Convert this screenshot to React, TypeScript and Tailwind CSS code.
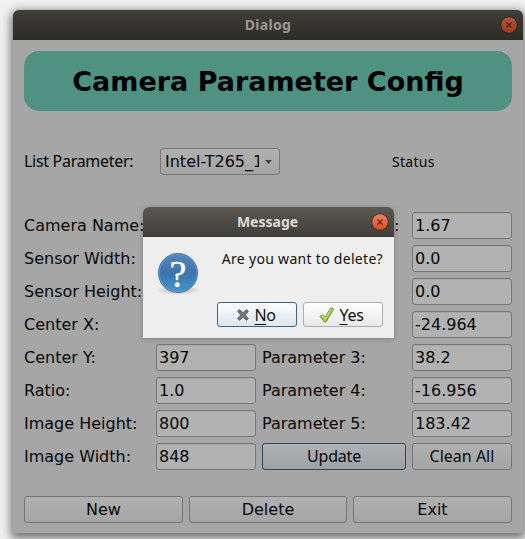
import React from "react";

const dejavu = "font-['DejaVu_Sans',sans-serif]";
const noto = "font-['Noto_Sans',sans-serif]";

function CloseButton({ dim }: { dim?: boolean }) {
  return (
    <svg viewBox="0 0 18 18" className="size-[18px]" aria-label="Close">
      <defs>
        <linearGradient id={dim ? "closeDim" : "closeLit"} x1="0" y1="0" x2="0" y2="1">
          <stop offset="0" stopColor={dim ? "#b0573a" : "#f5805c"} />
          <stop offset="1" stopColor={dim ? "#a03a1c" : "#e4491f"} />
        </linearGradient>
      </defs>
      <circle cx="9" cy="9" r="8.5" fill={dim ? "#23231f" : "#35342f"} />
      <circle cx="9" cy="9" r="7.8" fill={`url(#${dim ? "closeDim" : "closeLit"})`} />
      <path d="M6.4 6.4l5.2 5.2M11.6 6.4l-5.2 5.2" stroke="#38231b" strokeWidth="1.1" />
    </svg>
  );
}

function Label({ children }: { children: React.ReactNode }) {
  return <label className="flex h-[27px] items-center whitespace-nowrap pt-px">{children}</label>;
}

function Field({ value }: { value: string }) {
  return (
    <div className="flex h-[27px] items-center overflow-hidden rounded-[3px] border border-[#777] bg-[#b2b2b2] pl-[2px] pt-px shadow-[inset_0_1px_0_#a8a8a8]">
      {value}
    </div>
  );
}

function DimButton({ children, className = "" }: { children: React.ReactNode; className?: string }) {
  return (
    <button
      className={`flex h-[27px] items-center justify-center whitespace-nowrap rounded-[3px] border ${className || "border-[#777] bg-linear-to-b from-[#b0b0b0] to-[#a5a5a5] pt-px"}`}
    >
      {children}
    </button>
  );
}

const colon = <span className="pl-[132px]">:</span>;

const rows: [string, string, React.ReactNode, string][] = [
  ["Camera Name:", "", colon, "1.67"],
  ["Sensor Width:", "", "", "0.0"],
  ["Sensor Height:", "", "", "0.0"],
  ["Center X:", "", "", "-24.964"],
  ["Center Y:", "397", "Parameter 3:", "38.2"],
  ["Ratio:", "1.0", "Parameter 4:", "-16.956"],
  ["Image Height:", "800", "Parameter 5:", "183.42"],
];

function QuestionIcon() {
  return (
    <svg viewBox="0 0 46 46" className="h-[46px] w-[46px]">
      <defs>
        <linearGradient id="ball" x1="0" y1="0" x2="0" y2="1">
          <stop offset="0" stopColor="#5585bd" />
          <stop offset="0.5" stopColor="#3c74ac" />
          <stop offset="1" stopColor="#4595ca" />
        </linearGradient>
        <radialGradient id="ground">
          <stop offset="0" stopColor="#777" stopOpacity="0.55" />
          <stop offset="1" stopColor="#777" stopOpacity="0" />
        </radialGradient>
      </defs>
      <ellipse cx="23" cy="39" rx="22" ry="5" fill="url(#ground)" />
      <circle cx="23" cy="22" r="19.6" fill="url(#ball)" stroke="#295d94" strokeWidth="0.7" />
      <circle cx="23" cy="22" r="18.7" fill="none" stroke="#79a8d4" strokeOpacity="0.65" strokeWidth="0.8" />
      <text x="23" y="35.5" textAnchor="middle" fontSize="38" fill="#fff" stroke="#fff" strokeWidth="0.4" fontFamily="Liberation Serif, serif">?</text>
    </svg>
  );
}

function MessageBox() {
  return (
    <div className={`absolute left-[143px] top-[207px] h-[131px] w-[251px] overflow-hidden rounded-t-[6px] bg-[#eee] text-[14px] shadow-[0_1px_5px_rgba(0,0,0,0.25)] ${noto}`}>
      <div className="relative flex h-[30px] items-center justify-center bg-linear-to-b from-[#5b5850] to-[#403f3a] pb-px pr-[2px] font-bold text-[#dfdbd2]">
        Message
        <div className="absolute right-[5px] top-[6px]"><CloseButton /></div>
      </div>
      <div className="flex justify-between pl-[12px] pr-[11px] pt-[13px]">
        <div className="pt-px"><QuestionIcon /></div>
        <p className="whitespace-nowrap text-[14px] leading-[18px] tracking-[0.3px] text-[#111]">Are you want to delete?</p>
      </div>
      <div className="mt-[5px] flex justify-end gap-[6px] pr-[11px] text-[16px] text-[#111]">
        <button className="flex h-[25px] w-[80px] items-center justify-center gap-[5px] rounded-[3px] border border-[#3b6686] bg-linear-to-b from-[#fbfdfe] to-[#dce7ef] pr-[3px]">
          <svg viewBox="0 0 14 14" className="size-[14px]">
            <path d="M3.5 1.5L7 4.7l3.5-3.2 2 2L9.3 7l3.2 3.5-2 2L7 9.3l-3.5 3.2-2-2L4.7 7 1.5 3.5z" fill="#747474" stroke="#555" strokeWidth="0.8" strokeLinejoin="round" />
          </svg>
          <span className="tracking-[-0.5px]"><span className="underline decoration-1 underline-offset-[3px]">N</span>o</span>
        </button>
        <button className="flex h-[25px] w-[80px] items-center justify-center gap-[4px] rounded-[3px] border border-[#adadad] bg-linear-to-b from-[#fefefe] to-[#e9e9e9] pr-[3px]">
          <svg viewBox="0 0 16 16" className="size-[16px]">
            <path d="M1 9.4l2.6-1.7 2.3 2.8L11.8.8l2.8 1.1-7.5 13-1.6.2z" fill="#a3d34c" stroke="#5d852a" strokeWidth="0.9" strokeLinejoin="round" />
            <path d="M2.3 9.5l1.2-.8 2.5 3L12.2 2" fill="none" stroke="#d0eb96" strokeWidth="0.8" />
          </svg>
          <span className="tracking-[-0.3px]"><span className="underline decoration-1 underline-offset-[3px]">Y</span>es</span>
        </button>
      </div>
    </div>
  );
}

export default function App() {
  return (
    <div className={`relative h-[539px] w-[525px] overflow-hidden bg-[#f0f0f0] pl-[13px] pt-[10px] text-[16px] text-[#080808] ${dejavu}`}>
      <main className="flex h-[523px] w-[510px] flex-col rounded-t-[6px] bg-[#a6a6a6] shadow-[0_3px_10px_2px_rgba(0,0,0,0.55)]">
        <header className={`relative flex h-[30px] shrink-0 items-center justify-center rounded-t-[6px] bg-linear-to-b from-[#3f3e39] to-[#2c2c28] pb-[2px] text-[14px] font-bold tracking-[0.3px] text-[#9b9892] ${noto}`}>
          Dialog
          <div className="absolute right-[5px] top-[6px]"><CloseButton dim /></div>
        </header>
        <div className="flex flex-col px-[11px] pt-[11px]">
          <h1 className="flex h-[60px] items-center justify-center rounded-[15px] bg-[#509281] pt-[2px] text-[27px] font-bold text-black">
            Camera Parameter Config
          </h1>
          <div className={`mt-[37px] flex h-[27px] items-center ${noto}`}>
            <span className="w-[136px] whitespace-nowrap pb-px tracking-[-0.3px]">List Parameter:</span>
            <div className={`flex h-[27px] w-[120px] items-center justify-between rounded-[3px] border border-[#777] bg-linear-to-b from-[#b0b0b0] to-[#a5a5a5] pl-[4px] pr-[7px] ${dejavu}`}>
              <span className="w-[94px] overflow-hidden whitespace-nowrap">Intel-T265_1</span>
              <svg viewBox="0 0 7 4" className="h-[4px] w-[7px]"><path d="M0 0h7L3.5 4z" fill="#444" /></svg>
            </div>
            <span className="ml-[112px] text-[14px] tracking-[0.3px]">Status</span>
          </div>
          <div className="mt-[37px] grid grid-cols-[126px_100px_144px_100px] gap-[6px]">
            {rows.map((row) => (
              <React.Fragment key={row[0]}>
                <Label>{row[0]}</Label>
                <Field value={row[1]} />
                <Label>{row[2]}</Label>
                <Field value={row[3]} />
              </React.Fragment>
            ))}
            <Label>Image Width:</Label>
            <Field value="848" />
            <DimButton className={`border-[#29465c] bg-linear-to-b from-[#b0b2b3] to-[#9ba3a8] pb-px tracking-[-0.2px] ${noto}`}>Update</DimButton>
            <DimButton className={`border-[#777] bg-linear-to-b from-[#b0b0b0] to-[#a5a5a5] pb-px ${noto}`}>Clean All</DimButton>
          </div>
          <div className="mt-[26px] grid grid-cols-[159px_158px_159px] gap-[6px]">
            <DimButton>New</DimButton>
            <DimButton>Delete</DimButton>
            <DimButton>Exit</DimButton>
          </div>
        </div>
      </main>
      <MessageBox />
    </div>
  );
}
